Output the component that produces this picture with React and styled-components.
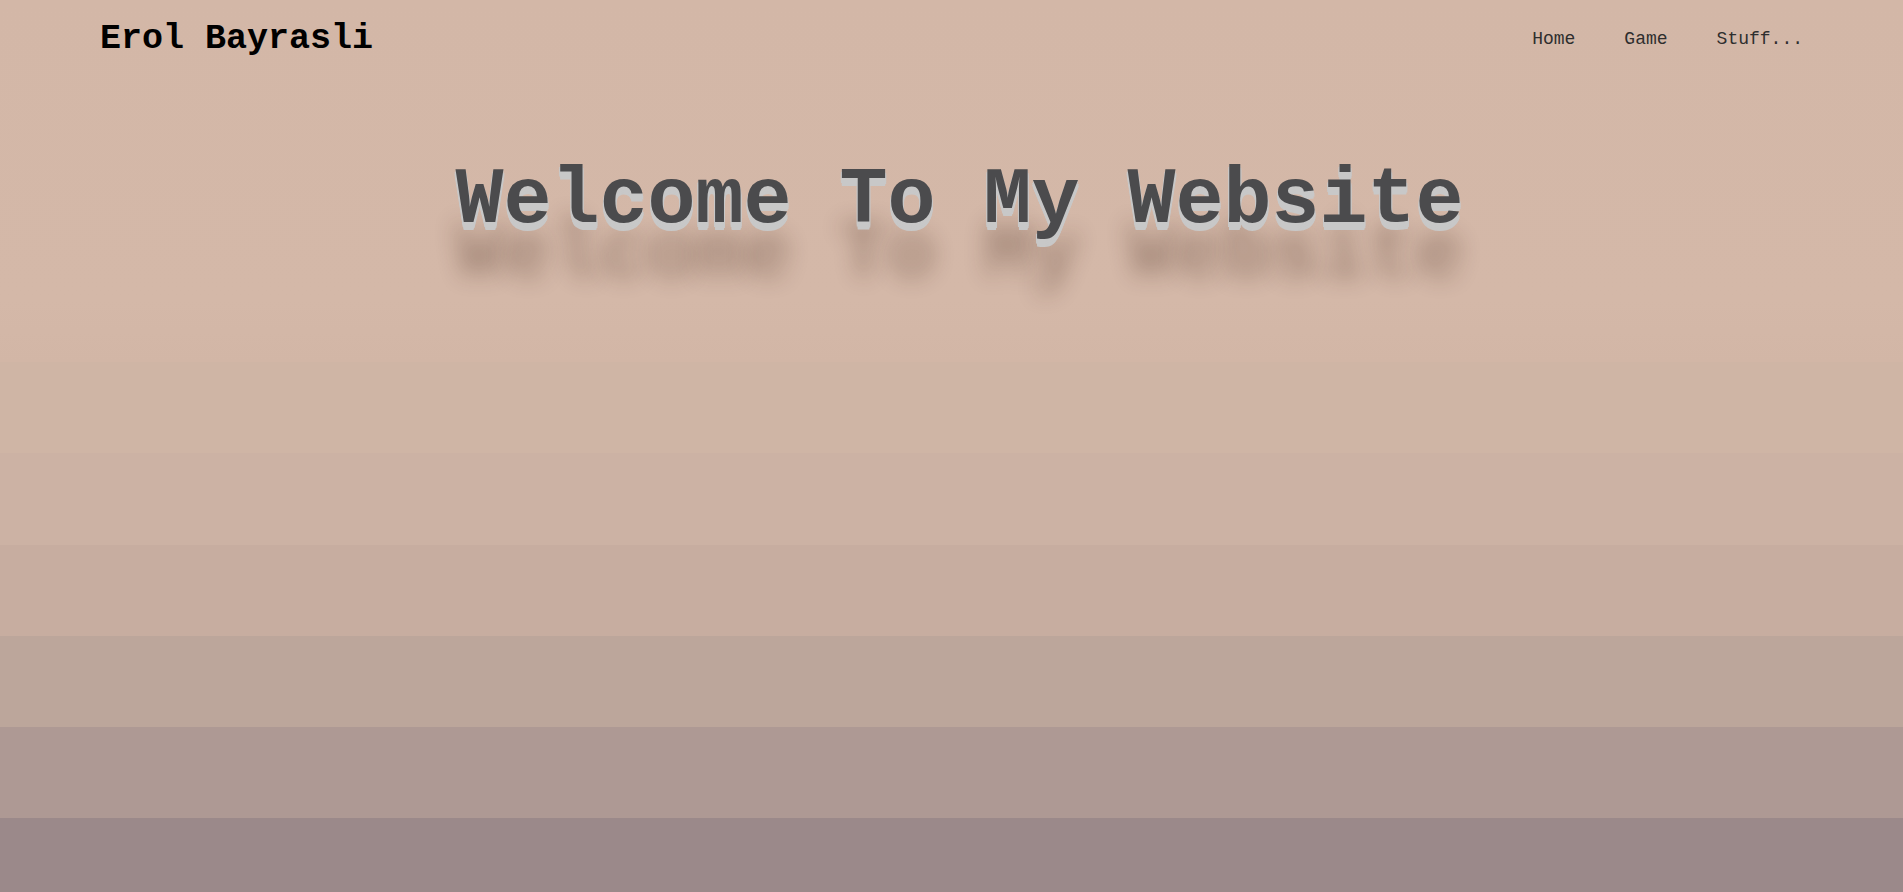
import React from 'react';
import styled, { createGlobalStyle } from 'styled-components';

const links = ['Home', 'Game', 'Stuff...'];

const App = () => {
  return (
    <>
      <GlobalStyle />
      <Page>
        <Header>
          <Brand>Erol Bayrasli</Brand>
          <Nav>
            {links.map((label) => (
              <NavLink key={label} href="#">
                {label}
              </NavLink>
            ))}
          </Nav>
        </Header>
        <Hero>
          <Title>Welcome To My Website</Title>
        </Hero>
      </Page>
    </>
  );
};

export default App;

const GlobalStyle = createGlobalStyle`
  html, body {
    margin: 0;
    padding: 0;
  }

  body {
    font-family: "Liberation Mono", "Courier New", monospace;
  }
`;

const Page = styled.div`
  min-height: 100vh;
  background: linear-gradient(
    to bottom,
    #d3b7a7 0px,
    #d4b8a8 300px,
    #d2b6a6 362px,
    #cfb5a5 362px,
    #cfb5a5 453px,
    #ccb2a4 453px,
    #ccb2a4 545px,
    #c7ada0 545px,
    #c7ada0 636px,
    #bca69b 636px,
    #bca69b 727px,
    #ae9994 727px,
    #ae9994 818px,
    #9b898a 818px,
    #9b898a 100%
  );
`;

const Header = styled.header`
  display: flex;
  align-items: center;
  justify-content: space-between;
  height: 74px;
  padding: 2px 100px 0;
`;

const Brand = styled.div`
  font-size: 35px;
  font-weight: bold;
  color: #000;
`;

const Nav = styled.nav`
  display: flex;
  gap: 49px;
`;

const NavLink = styled.a`
  font-size: 18px;
  color: #2e2e2e;
  text-decoration: none;
`;

const Hero = styled.section`
  display: flex;
  justify-content: center;
  padding: 77px 0 0 16px;
`;

const Title = styled.h1`
  margin: 0;
  font-size: 80px;
  font-weight: bold;
  line-height: 1.2;
  color: #4b4b4d;
  text-shadow:
    0 1px 0 #c8c8c8,
    0 2px 0 #c8c8c8,
    -1px 3px 0 #c8c8c8,
    1px 4px 0 #c8c8c8,
    -1px 5px 0 #c8c8c8,
    1px 6px 0 #c8c8c8,
    0 7px 0 #c8c8c8,
    0 8px 0 #c8c8c8,
    0 54px 22px rgba(60, 30, 20, 0.32);
`;
